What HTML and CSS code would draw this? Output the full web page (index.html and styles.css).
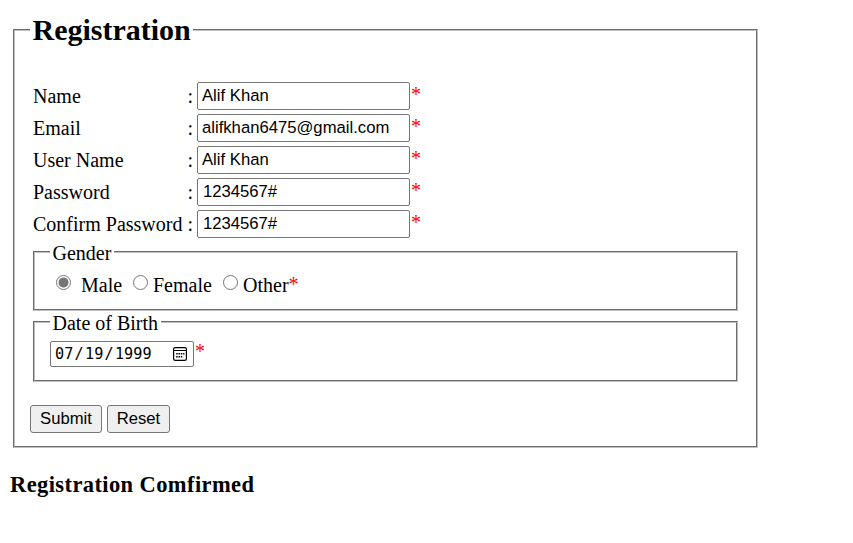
FILE: index.html
```html
<!DOCTYPE html>
<html lang="en">
<head>
<meta charset="utf-8">
<title>Registration</title>
<link rel="stylesheet" href="styles.css">
</head>
<body>
<form>
<fieldset class="registration">
  <legend class="title">Registration</legend>
  <div class="fields">
    <label for="name">Name</label><span>:</span><input class="box" id="name" type="text" value="Alif Khan"><span class="required">*</span>
    <label for="email">Email</label><span>:</span><input class="box" id="email" type="text" value="alifkhan6475@gmail.com"><span class="required">*</span>
    <label for="user">User Name</label><span>:</span><input class="box" id="user" type="text" value="Alif Khan"><span class="required">*</span>
    <label for="pass">Password</label><span>:</span><input class="box pass" id="pass" type="text" value="1234567#"><span class="required">*</span>
    <label for="confirm">Confirm Password</label><span>:</span><input class="box pass" id="confirm" type="text" value="1234567#"><span class="required">*</span>
  </div>
  <fieldset class="group gender">
    <legend>Gender</legend>
    <div class="options">
      <label class="male"><i class="radio checked"></i><span>Male</span></label>
      <label class="female"><i class="radio"></i><span>Female</span></label>
      <label class="other"><i class="radio"></i><span>Other</span></label><span class="required">*</span>
    </div>
  </fieldset>
  <fieldset class="group birth">
    <legend>Date of Birth</legend>
    <div class="birth-row">
      <div class="date">
        <span>07</span><span class="slash">/</span><span>19</span><span class="slash">/</span><span>1999</span>
        <svg class="calendar" width="14" height="14" viewBox="0 0 14 14">
          <rect x=".6" y=".6" width="12.8" height="12.8" rx="1.6" fill="none" stroke="#000" stroke-width="1.2"/>
          <path d="M1 3.5h12" stroke="#000" stroke-width="1"/>
          <path d="M5.5 6H7v1.5H5.5zM7.8 6h1.5v1.5H7.8zM10.1 6h1.3v1.5h-1.3zM3.2 9h1.5v1.5H3.2zM5.5 9H7v1.5H5.5zM7.8 9h1.5v1.5H7.8zM3.2 6h1.5v1.5H3.2z" fill="#000"/>
        </svg>
      </div>
      <span class="required">*</span>
    </div>
  </fieldset>
  <div class="actions"><button class="submit" type="button">Submit</button><button class="reset" type="button">Reset</button></div>
</fieldset>
</form>
<h2 class="status">Registration Comfirmed</h2>
</body>
</html>
```
FILE: styles.css
```css
* { box-sizing: border-box; }
body {
  margin: 0;
  padding: 13px 0 0;
  font: 20px/22px "Liberation Serif", "Times New Roman", serif;
  color: #000;
  background: #fff;
}
form { margin: 0 0 0 13px; width: 745px; }
fieldset { margin: 0; border: 2px groove #c0c0c0; min-width: 0; }
.registration { height: 435px; padding: 0 18px 0 15px; }
.title { padding: 0 2.5px; font-size: 30px; line-height: 34px; font-weight: bold; }
.fields {
  display: grid;
  grid-template-columns: 154.5px 9.5px 213px 12px;
  grid-auto-rows: 28px;
  row-gap: 4px;
  align-items: center;
  margin: 35px 0 0 3px;
}
.required { color: #f00; }
.fields .required { padding: 0 0 4px 1px; }
.box {
  width: 213px;
  height: 28px;
  padding: 0 4px 1px;
  border: 1px solid #767676;
  border-radius: 2px;
  font: 16.67px/20px "Liberation Sans", Arial, sans-serif;
  color: #000;
  background: #fff;
}
.pass { padding-left: 5px; }
.group { width: 705px; margin-left: 3px; padding: 0 15px; }
.group legend { padding: 0 2.5px; height: 22px; line-height: 24px; }
.gender { height: 70px; margin-top: 3px; }
.birth { height: 71px; }
.options { display: flex; padding: 11px 0 0 6px; }
.options label { display: flex; }
.radio {
  width: 15px;
  height: 15px;
  margin-top: 1px;
  border: 1px solid #767676;
  border-radius: 50%;
  background: #fff;
}
.checked { background: radial-gradient(circle, #767676 4.6px, #fff 5.4px); }
.male { width: 77px; gap: 10px; }
.female { width: 90px; gap: 5px; }
.other { gap: 5px; }
.options .required { margin-top: -1px; }
.birth-row { display: flex; padding-top: 8px; }
.birth-row .required { padding-left: 1px; margin-top: -1px; }
.date {
  display: flex;
  align-items: center;
  width: 144px;
  height: 26px;
  padding: 0 6px 0 4px;
  border: 1px solid #767676;
  border-radius: 2px;
  font: 15.2px/20px "DejaVu Sans Mono", monospace;
}
.slash { width: 11.7px; text-align: center; }
.calendar { margin-left: auto; }
.actions { display: flex; gap: 5px; margin-top: 23px; }
button {
  height: 28px;
  padding: 0 0 1px;
  border: 1px solid #767676;
  border-radius: 3px;
  font: 16.67px/20px "Liberation Sans", Arial, sans-serif;
  color: #000;
  background: #efefef;
}
.submit { width: 72px; }
.reset { width: 63px; }
.status { margin: 23px 0 0 10px; font-size: 22.5px; line-height: 28px; letter-spacing: .4px; }
```
